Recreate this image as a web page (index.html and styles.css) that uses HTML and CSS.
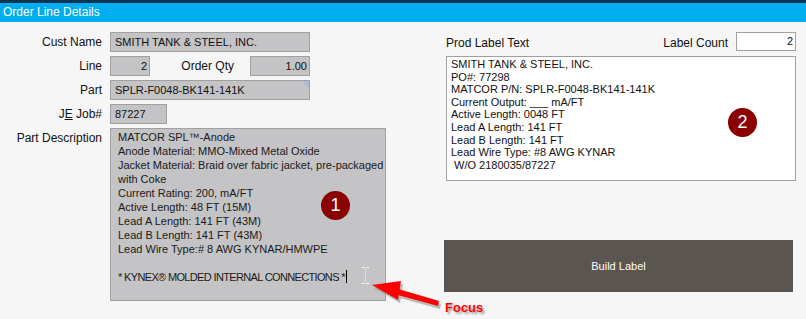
FILE: index.html
```html
<!DOCTYPE html>
<html lang="en">
<head>
    <meta charset="UTF-8">
    <title>Order Line Details</title>
    <link rel="stylesheet" href="styles.css">
</head>
<body>
    <div class="titlebar">Order Line Details</div>

    <div class="page">
        <div class="form">
            <label class="lbl">Cust Name</label>
            <div class="field w200">SMITH TANK &amp; STEEL, INC.</div>

            <label class="lbl">Line</label>
            <div class="line-row">
                <div class="field w40 right">2</div>
                <label class="lbl qty-lbl">Order Qty</label>
                <div class="field w60 right">1.00</div>
            </div>

            <label class="lbl">Part</label>
            <div class="field w200 lookup">SPLR-F0048-BK141-141K</div>

            <label class="lbl">J<u>E</u> Job#</label>
            <div class="field w57">87227</div>

            <label class="lbl">Part Description</label>
            <div class="memo gray">
                <div>MATCOR SPL™-Anode</div>
                <div>Anode Material: MMO-Mixed Metal Oxide</div>
                <div>Jacket Material: Braid over fabric jacket, pre-packaged</div>
                <div>with Coke</div>
                <div>Current Rating: 200, mA/FT</div>
                <div>Active Length: 48 FT (15M)</div>
                <div>Lead A Length: 141 FT (43M)</div>
                <div>Lead B Length: 141 FT (43M)</div>
                <div>Lead Wire Type:# 8 AWG KYNAR/HMWPE</div>
                <div>&nbsp;</div>
                <div class="caps">* KYNEX® MOLDED INTERNAL CONNECTIONS *<span class="caret"></span></div>
                <span class="badge badge-1">1</span>
                <svg class="ibeam" width="7" height="17" viewBox="0 0 7 17">
                    <path d="M0 0.5h2.5M4.5 0.5h2.5M3.5 1v15M0 16.5h2.5M4.5 16.5h2.5" stroke="#fff" stroke-width="1" fill="none"/>
                    <path d="M3.5 1v15" stroke="#ddd" stroke-width="1"/>
                </svg>
            </div>
        </div>

        <div class="side">
            <div class="side-head">
                <label class="lbl">Prod Label Text</label>
                <div class="count">
                    <label class="lbl">Label Count</label>
                    <div class="field white w60 right">2</div>
                </div>
            </div>
            <div class="memo white-memo">
                <div>SMITH TANK &amp; STEEL, INC.</div>
                <div>PO#: 77298</div>
                <div>MATCOR P/N: SPLR-F0048-BK141-141K</div>
                <div>Current Output: ___ mA/FT</div>
                <div>Active Length: 0048 FT</div>
                <div>Lead A Length: 141 FT</div>
                <div>Lead B Length: 141 FT</div>
                <div>Lead Wire Type: #8 AWG KYNAR</div>
                <div>&nbsp;W/O 2180035/87227</div>
                <span class="badge badge-2">2</span>
            </div>
            <button class="build">Build Label</button>
        </div>
    </div>

    <svg class="arrow" width="130" height="40" viewBox="0 0 130 40">
        <g transform="translate(2,3)" fill="#8a8a8a" opacity="0.55">
            <polygon points="32,9 61,5 58,24"/>
            <polygon points="55,12 99,25 98,30 54,18"/>
        </g>
        <polygon points="32,9 61,5 58,24" fill="#ff0000"/>
        <polygon points="55,12 99,25 98,30 54,18" fill="#ff0000"/>
    </svg>
    <span class="focus">Focus</span>
</body>
</html>
```

FILE: styles.css
```css
body {
    margin: 0;
    background-color: #f6f6f6;
    font-family: "Liberation Sans", Arial, sans-serif;
    font-size: 11px;
    color: #111;
    width: 806px;
    height: 319px;
    overflow: hidden;
    position: relative;
}

.titlebar {
    border-top: 3px solid #0b3553;
    background-color: #00adef;
    color: #fff;
    font-size: 12px;
    height: 19px;
    line-height: 19px;
    padding-left: 3px;
}

.page {
    display: flex;
    padding-top: 10px;
}

.form {
    display: grid;
    grid-template-columns: 102px auto;
    column-gap: 8px;
    row-gap: 4px;
    grid-auto-rows: 20px;
    align-items: start;
}

.lbl {
    font-size: 12px;
    color: #111;
    text-align: right;
    line-height: 20px;
    white-space: nowrap;
}

.field {
    box-sizing: border-box;
    height: 20px;
    line-height: 18px;
    background-color: #c4c3c5;
    border: 1px solid #a0a0a0;
    padding: 0 4px;
    white-space: nowrap;
    position: relative;
}

.right { text-align: right; padding-right: 2px; }
.w200 { width: 200px; }
.w40 { width: 40px; }
.w57 { width: 57px; }
.w60 { width: 60px; }

.lookup::after {
    content: "";
    position: absolute;
    top: 0;
    right: 0;
    border-top: 7px solid #a9bfd9;
    border-left: 7px solid transparent;
}

.line-row {
    display: flex;
}

.qty-lbl {
    width: 100px;
    padding-right: 16px;
    box-sizing: border-box;
}

.memo {
    box-sizing: border-box;
    border: 1px solid #a0a0a0;
    position: relative;
    white-space: nowrap;
}

.memo.gray {
    width: 276px;
    height: 173px;
    background-color: #c4c3c5;
    padding: 1px 4px 0 7px;
    line-height: 14px;
    color: #1a1a1a;
}

.memo .caps {
    letter-spacing: -0.65px;
}

.caret {
    display: inline-block;
    width: 1px;
    height: 13px;
    background-color: #000;
    vertical-align: -2px;
    margin-left: 1px;
}

.ibeam {
    position: absolute;
    left: 251px;
    top: 138px;
}

.badge {
    position: absolute;
    width: 29px;
    height: 29px;
    border-radius: 50%;
    background-color: #8b0000;
    color: #fff;
    font-size: 18px;
    line-height: 29px;
    text-align: center;
}

.badge-1 { left: 210px; top: 62px; }
.badge-2 { left: 281px; top: 51px; }

.side {
    margin-left: 60px;
    width: 350px;
}

.side-head {
    display: flex;
    justify-content: space-between;
    height: 18px;
    margin-bottom: 6px;
}

.side-head .lbl {
    line-height: 22px;
}

.count {
    display: flex;
    gap: 8px;
}

.field.white {
    background-color: #fff;
    height: 19px;
    line-height: 17px;
}

.white-memo {
    width: 350px;
    height: 125px;
    background-color: #fff;
    padding: 1px 4px 0 4px;
    line-height: 12.6px;
    color: #111;
}

.build {
    display: block;
    margin: 59px 0 0 -2px;
    width: 349px;
    height: 52px;
    border: none;
    background-color: #5b5552;
    color: #fff;
    font-family: "Liberation Sans", Arial, sans-serif;
    font-size: 11px;
}

.arrow {
    position: absolute;
    left: 340px;
    top: 276px;
}

.focus {
    position: absolute;
    left: 445px;
    top: 300px;
    font-size: 13px;
    font-weight: bold;
    color: #ff0000;
    text-shadow: 2px 2px 2px rgba(0, 0, 0, 0.35);
}
```
